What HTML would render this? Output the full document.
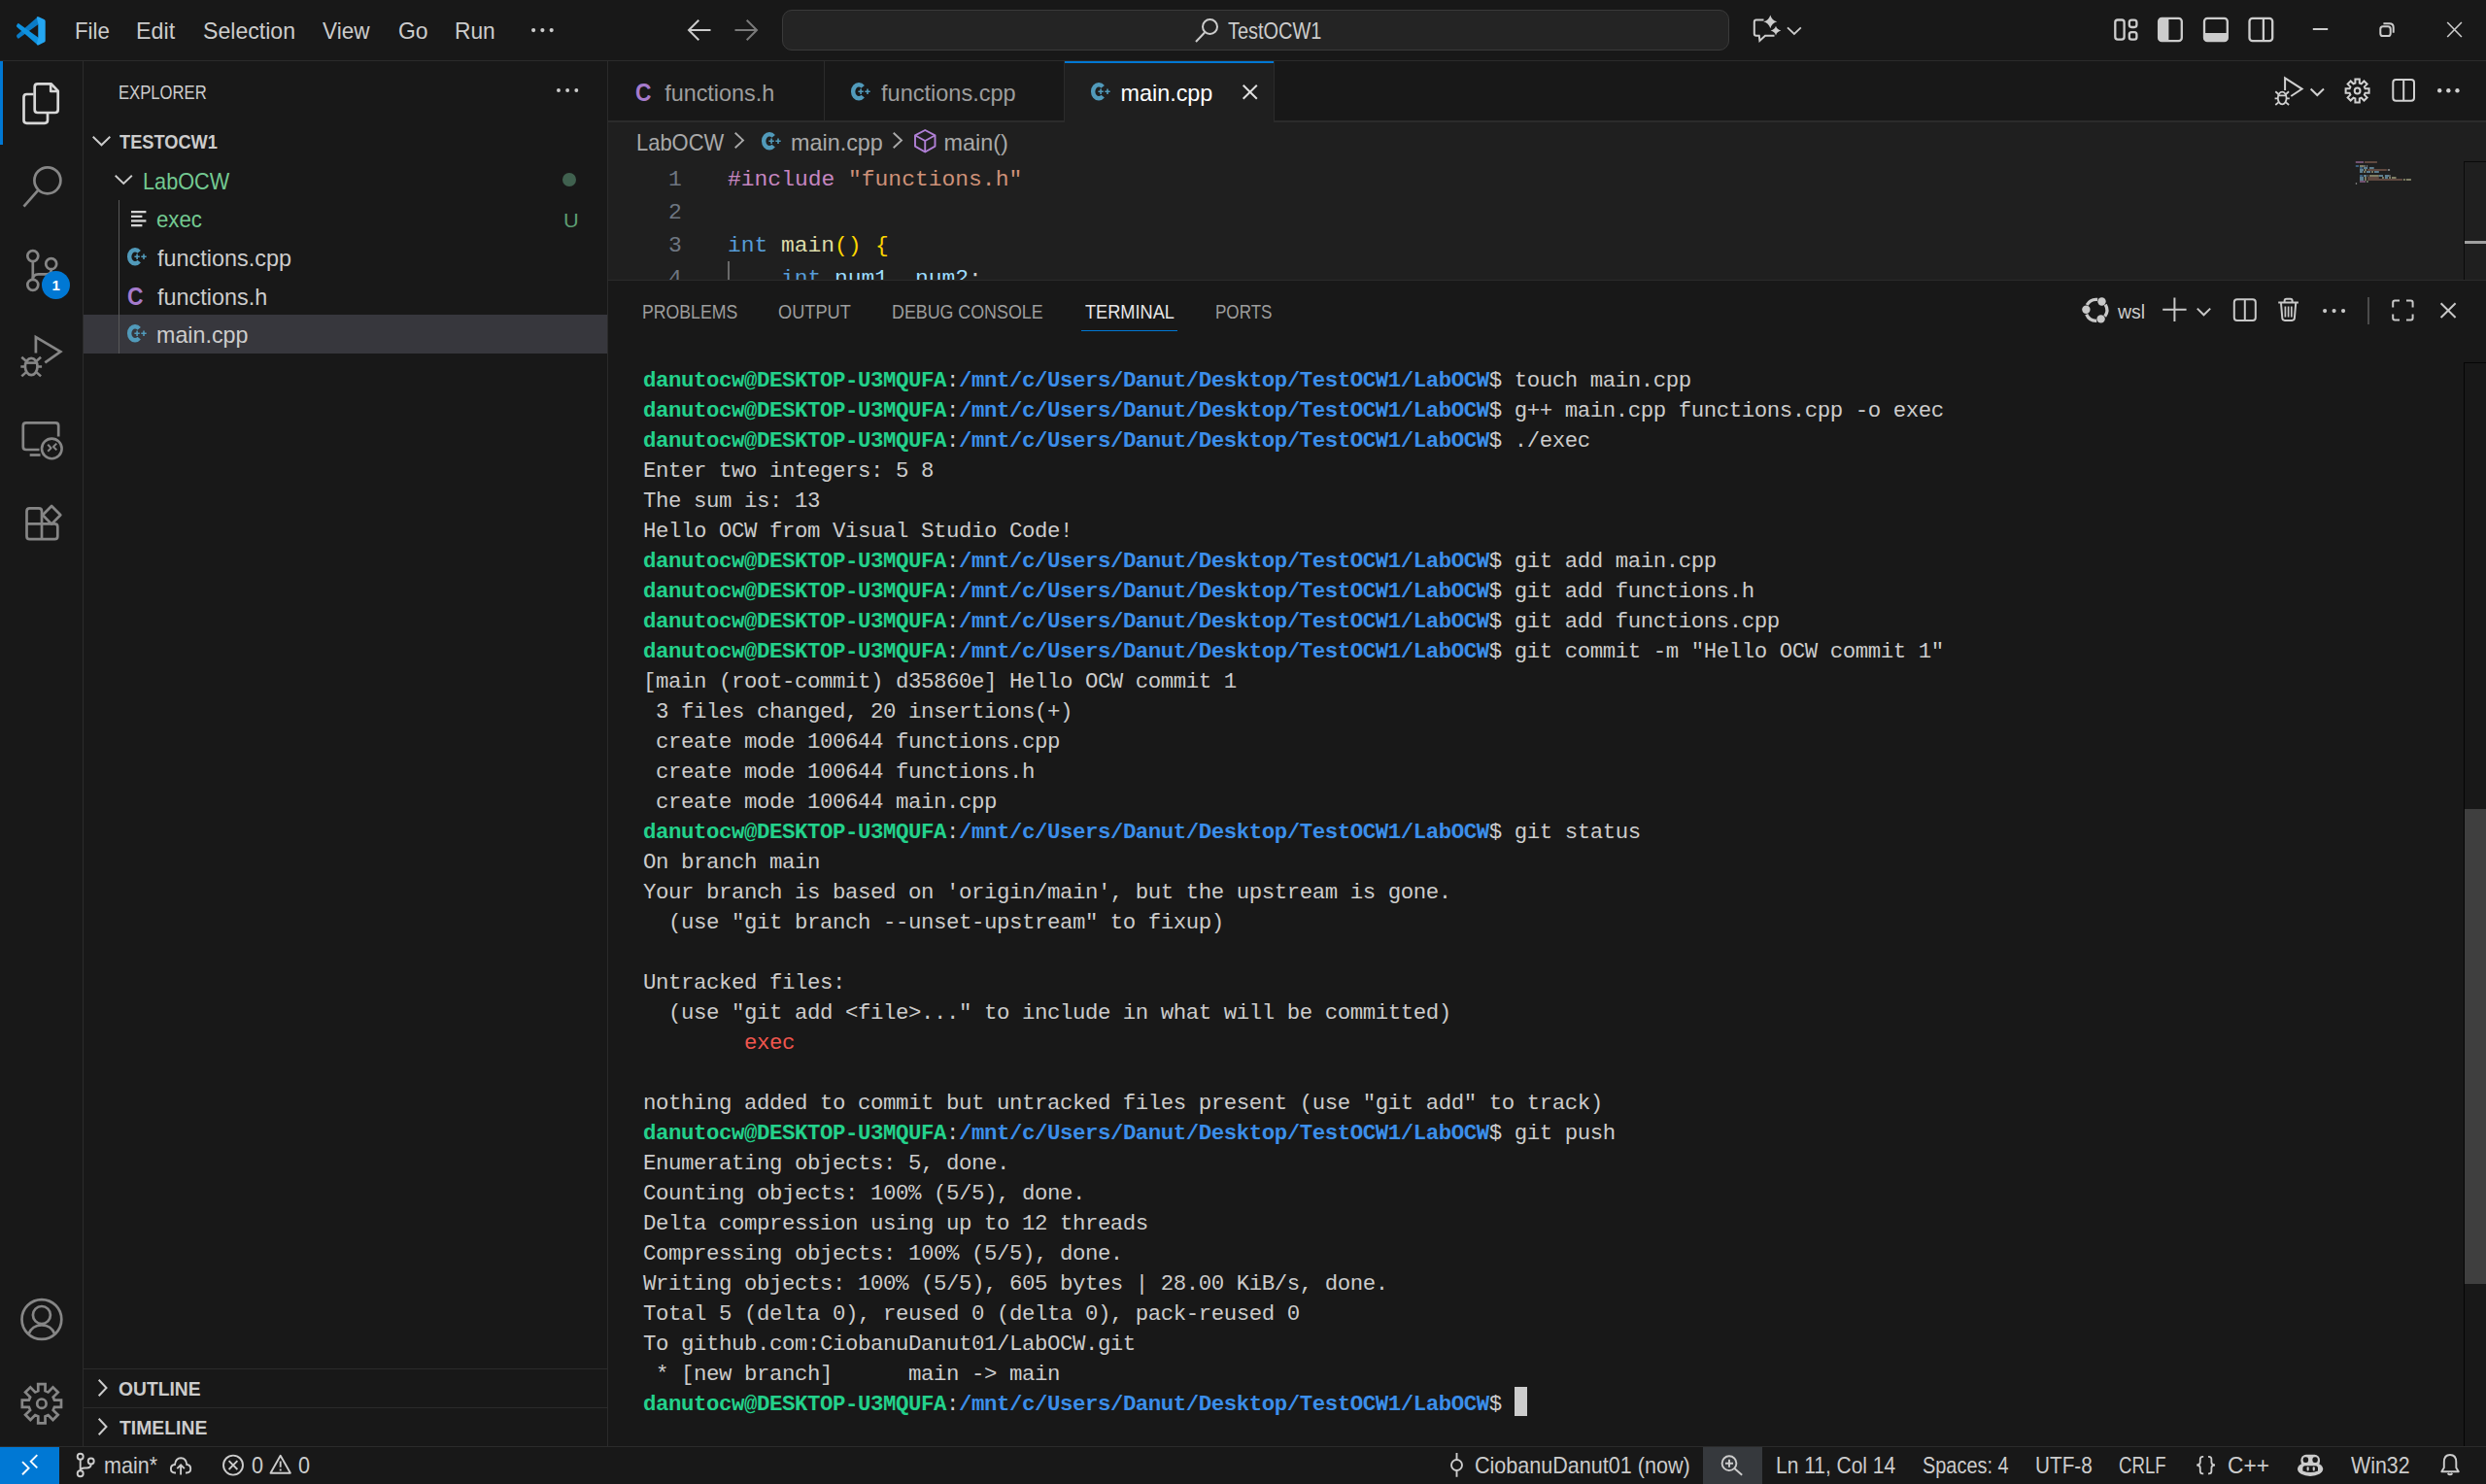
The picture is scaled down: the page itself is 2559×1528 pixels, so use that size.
<!DOCTYPE html>
<html>
<head>
<meta charset="utf-8">
<title>main.cpp - TestOCW1 - Visual Studio Code</title>
<style>
*{box-sizing:border-box;margin:0;padding:0}
html,body{width:2559px;height:1528px;overflow:hidden;background:#181818;color:#cccccc;font-family:"Liberation Sans",sans-serif;font-size:23.4px}
.t{position:absolute;white-space:pre;line-height:1}
.b{position:absolute}
svg{position:absolute;overflow:visible}
#titlebar{position:absolute;left:0;top:0;width:2559px;height:63px;background:#181818;border-bottom:1px solid #2b2b2b}
#activity{position:absolute;left:0;top:63px;width:86px;height:1426px;background:#181818;border-right:1px solid #2b2b2b}
#sidebar{position:absolute;left:86px;top:63px;width:540px;height:1426px;background:#181818;border-right:1px solid #2b2b2b}
#tabs{position:absolute;left:626px;top:63px;width:1933px;height:63px;background:#181818;border-bottom:2px solid #2b2b2b}
#editor{position:absolute;left:626px;top:126px;width:1933px;height:162px;background:#1f1f1f;overflow:hidden}
#panel{position:absolute;left:626px;top:288px;width:1933px;height:1201px;background:#181818;border-top:1px solid #2b2b2b;overflow:hidden}
#status{position:absolute;left:0;top:1489px;width:2559px;height:39px;background:#181818;border-top:1px solid #2b2b2b}
.term{position:absolute;font-family:"Liberation Mono",monospace;font-size:22.4px;letter-spacing:-0.44px;line-height:31px;white-space:pre;color:#cccccc}
.g{color:#23d18b;font-weight:bold}
.bl{color:#3b8eea;font-weight:bold}
.r{color:#f0564e}
</style>
</head>
<body>
<div id="titlebar">
<svg style="left:16.6px;top:16.6px" width="29.7" height="29.7" viewBox="0 0 100 100">
<path d="M74 1 L76 27 L8 76 Q5 77 3 74 L0.5 69 Q-1 66 2 63 Z" fill="#0a7bc6"/>
<path d="M8 24 Q5 23 3 26 L0.5 31 Q-1 34 2 37 L74 99 L76 73 Z" fill="#0e92e0"/>
<path d="M70 2 Q73 0 76 1 L96 10.5 Q100 12.5 100 17 L100 83 Q100 87.5 96 89.5 L76 99 Q73 100 70 98 L75 73 L75 27 Z" fill="#24a6f2"/>
</svg>
<div class="t" style="left:77.02px;top:21px;font-size:23.4px;color:#cccccc;transform:scaleX(0.9522);transform-origin:0 0;">File</div>
<div class="t" style="left:140.14px;top:21px;font-size:23.4px;color:#cccccc;transform:scaleX(0.9954);transform-origin:0 0;">Edit</div>
<div class="t" style="left:208.76px;top:21px;font-size:23.4px;color:#cccccc;transform:scaleX(0.9879);transform-origin:0 0;">Selection</div>
<div class="t" style="left:332.00px;top:21px;font-size:23.4px;color:#cccccc;transform:scaleX(0.9640);transform-origin:0 0;">View</div>
<div class="t" style="left:409.56px;top:21px;font-size:23.4px;color:#cccccc;transform:scaleX(0.9783);transform-origin:0 0;">Go</div>
<div class="t" style="left:468.08px;top:21px;font-size:23.4px;color:#cccccc;transform:scaleX(0.9732);transform-origin:0 0;">Run</div>
<svg style="left:546.60px;top:28.90px" width="22.8" height="4.2" viewBox="0 0 22.8 4.2" fill="#cccccc"><circle cx="2.1" cy="2.1" r="2.1"/><circle cx="11.4" cy="2.1" r="2.1"/><circle cx="20.700000000000003" cy="2.1" r="2.1"/></svg>
<svg style="left:0;top:0" width="2559" height="62" viewBox="0 0 2559 62" fill="none" stroke="#cccccc" stroke-width="2">
<path d="M731.5 31 H709 M719.3 20.7 L709 31 L719.3 41.3"/>
<path d="M756.5 31 H779 M768.7 20.7 L779 31 L768.7 41.3" stroke="#7a7a7a"/>
</svg>
<div class="b" style="left:805px;top:10px;width:975px;height:42px;background:#242424;border:1px solid #3a3a3a;border-radius:10px"></div>
<svg style="left:1230px;top:18px" width="25" height="26" viewBox="0 0 25 26" fill="none" stroke="#cccccc" stroke-width="2"><circle cx="15.5" cy="9.5" r="7.5"/><path d="M10 15.5 L1 25"/></svg>
<div class="t" style="left:1264.40px;top:21px;font-size:23.4px;color:#cccccc;transform:scaleX(0.8529);transform-origin:0 0;">TestOCW1</div>
<svg style="left:0;top:0" width="2559" height="62" viewBox="0 0 2559 62" fill="none" stroke="#cccccc" stroke-width="2" stroke-linejoin="miter">
<path d="M1815.5 20.4 H1807.8 Q1805.8 20.4 1805.8 22.4 V34.8 Q1805.8 36.8 1807.8 36.8 H1810.8 L1811.4 42 L1817 36.8 H1826.5"/>
<path d="M1822.3 15.4 Q1823.84 20.782 1829.3 22.3 Q1823.84 23.818 1822.3 29.200000000000003 Q1820.76 23.818 1815.3 22.3 Q1820.76 20.782 1822.3 15.4 Z" fill="#cccccc" stroke="none"/>
<path d="M1828 26.8 Q1829.166 30.544 1833.3 31.6 Q1829.166 32.656 1828 36.4 Q1826.834 32.656 1822.7 31.6 Q1826.834 30.544 1828 26.8 Z" fill="#cccccc" stroke="none"/>
<path d="M1840 28.3 L1846.9 34.9 L1853.8 28.3" stroke-width="1.8"/>
<g stroke-width="2.3">
<rect x="2177.3" y="20.5" width="9.3" height="20.1" rx="2.6"/>
<rect x="2191.8" y="20.6" width="7.6" height="7.4" rx="2.4"/>
<rect x="2191.8" y="33.2" width="7.6" height="7.4" rx="2.4"/>
<rect x="2222.1" y="18.9" width="23.7" height="23.3" rx="3.2"/>
<path d="M2222.1 22.1 Q2222.1 18.9 2225.3 18.9 H2232.4 V42.2 H2225.3 Q2222.1 42.2 2222.1 39 Z" fill="#cccccc" stroke="none"/>
<rect x="2269" y="18.9" width="23.8" height="23.3" rx="3.2"/>
<path d="M2269 33.9 H2292.8 V39 Q2292.8 42.2 2289.6 42.2 H2272.2 Q2269 42.2 2269 39 Z" fill="#cccccc" stroke="none"/>
<rect x="2315.5" y="18.9" width="23.7" height="23.3" rx="3.2"/>
<path d="M2329.9 18.9 V42.2"/>
</g>
<path d="M2380.8 30 H2396.2"/>
<rect x="2450.3" y="27.3" width="10.4" height="9.7" rx="2.6"/>
<path d="M2453.4 24.2 H2459.7 Q2463.7 24.2 2463.7 28.2 V33.8"/>
<path d="M2519.2 23 L2533.9 38 M2533.9 23 L2519.2 38" stroke-width="1.6"/>
</svg>
</div>
<div id="activity">
<div class="b" style="left:0;top:0;width:3px;height:86px;background:#0078d4"></div>
<svg style="left:0;top:0" width="86" height="1426" viewBox="0 63 86 1426" fill="none" stroke-width="2.7" stroke-linejoin="round" stroke-linecap="butt">
<g stroke="#d7d7d7">
<path d="M38.7 86.3 H52.5 L59.7 93.6 V113 Q59.7 116 56.7 116 H38.7 Q35.7 116 35.7 113 V89.3 Q35.7 86.3 38.7 86.3 Z"/>
<path d="M52.2 86.8 V94 H59.5" stroke-width="2.6"/>
<path d="M34.5 97 H27.5 Q24.5 97 24.5 100 V123.8 Q24.5 126.8 27.5 126.8 H46 Q49 126.8 49 123.8 V117"/>
</g>
<g stroke="#868686">
<circle cx="48.9" cy="185.8" r="13.5"/>
<path d="M39 196.2 L24.5 212.6" />
<!-- source control -->
<circle cx="33.8" cy="263.6" r="5.5"/>
<circle cx="52.7" cy="271.7" r="5.5"/>
<circle cx="33.8" cy="293.3" r="5.5"/>
<path d="M33.8 269.1 V287.8"/>
<path d="M52.7 277.2 V278 Q52.7 282.4 48 282.4 H39.5 Q33.8 282.4 33.8 287.8"/>
<!-- debug -->
<path d="M36.9 363.5 V347 L62.3 362 L46.3 373.4" stroke-linejoin="miter"/>
<ellipse cx="32.2" cy="377.5" rx="6.3" ry="8.6"/>
<path d="M26 373.6 H38.4" stroke-width="2.6"/>
<path d="M25.9 377.5 H21.3 M38.5 377.5 H43.1 M26.6 371.5 L22.3 367.8 M37.8 371.5 L42.1 367.8 M26.8 383.4 L22.3 387.4 M37.6 383.4 L42.1 387.4" stroke-width="2.6"/>
<!-- remote explorer -->
<path d="M60.2 449.5 V438.3 Q60.2 435.3 57.2 435.3 H26.8 Q23.8 435.3 23.8 438.3 V460 Q23.8 463 26.8 463 H40.5"/>
<path d="M30.7 468.5 H41.5" />
<circle cx="53.3" cy="461.9" r="10.3" stroke-width="2.6"/>
<path d="M49.2 457.7 L52.6 461.2 L49.2 464.8 M58.3 456.6 L54.9 460 L58.3 463.4" stroke-width="2"/>
<!-- extensions -->
<path d="M27.5 539.3 V526.4 Q27.5 523.4 30.5 523.4 H40 Q43 523.4 43 526.4 V539.3 M27.5 539.3 V552.2 Q27.5 555.2 30.5 555.2 H56.3 Q59.3 555.2 59.3 552.2 V542.3 Q59.3 539.3 56.3 539.3 H27.5 M43 539.3 V555.2"/>
<path d="M53.1 521 L62.3 530.3 L53.1 539.6 L43.9 530.3 Z"/>
<!-- account -->
<circle cx="42.9" cy="1358.5" r="20.4"/>
<circle cx="42.9" cy="1354" r="9"/>
<path d="M29.5 1373.5 Q33 1364.5 42.9 1364.5 Q52.8 1364.5 56.3 1373.5" />
<!-- gear -->
<circle cx="42.9" cy="1445.2" r="4.7"/>
<path d="M39.3 1432.1 L39.2 1425.1 L46.6 1425.1 L46.5 1432.1 L49.6 1433.4 L54.5 1428.4 L59.7 1433.6 L54.7 1438.5 L56.0 1441.6 L63.0 1441.5 L63.0 1448.9 L56.0 1448.8 L54.7 1451.9 L59.7 1456.8 L54.5 1462.0 L49.6 1457.0 L46.5 1458.3 L46.6 1465.3 L39.2 1465.3 L39.3 1458.3 L36.2 1457.0 L31.3 1462.0 L26.1 1456.8 L31.1 1451.9 L29.8 1448.8 L22.8 1448.9 L22.8 1441.5 L29.8 1441.6 L31.1 1438.5 L26.1 1433.6 L31.3 1428.4 L36.2 1433.4 Z" stroke-linejoin="miter"/>
</g>
</svg>
<div class="b" style="left:43px;top:215.9px;width:29.2px;height:29.2px;border-radius:50%;background:#0078d4"></div>
<div class="t" style="left:43px;top:223px;width:29.2px;text-align:center;font-size:15px;font-weight:bold;color:#fff">1</div>
</div>
<div id="sidebar">
<div class="t" style="left:36.27px;top:23px;font-size:19.8px;color:#cccccc;transform:scaleX(0.8422);transform-origin:0 0;">EXPLORER</div>
<svg style="left:487.25px;top:28.35px" width="22.299999999999997" height="3.9" viewBox="0 0 22.299999999999997 3.9" fill="#cccccc"><circle cx="1.95" cy="1.95" r="1.95"/><circle cx="11.149999999999999" cy="1.95" r="1.95"/><circle cx="20.349999999999998" cy="1.95" r="1.95"/></svg>
<svg style="left:9.099999999999994px;top:76.9px" width="19" height="10.3" viewBox="0 0 19 10.3" fill="none" stroke="#cccccc" stroke-width="1.9"><path d="M0.7 0.7 L9.5 9.3 L18.3 0.7"/></svg>
<div class="t" style="left:36.62px;top:74px;font-size:19.8px;color:#cccccc;font-weight:700;transform:scaleX(0.9210);transform-origin:0 0;">TESTOCW1</div>
<div class="b" style="left:0;top:261px;width:539px;height:40px;background:#37373d"></div>
<div class="b" style="left:36px;top:143px;width:1px;height:158px;background:#585858"></div>
<svg style="left:32.3px;top:117.4px" width="18.5" height="9.9" viewBox="0 0 18.5 9.9" fill="none" stroke="#cccccc" stroke-width="1.9"><path d="M0.7 0.7 L9.25 8.9 L17.8 0.7"/></svg>
<div class="t" style="left:61.16px;top:113px;font-size:23.4px;color:#73c991;transform:scaleX(0.9278);transform-origin:0 0;">LabOCW</div>
<div class="b" style="left:493.20000000000005px;top:115.4px;width:13.8px;height:13.8px;border-radius:50%;background:#40614f"></div>
<svg style="left:49.400000000000006px;top:154.4px" width="16" height="17" viewBox="0 0 16 17" fill="#d4d4d4"><rect x="0" y="0" width="15.4" height="2.3"/><rect x="0" y="4.7" width="11.4" height="2.3"/><rect x="0" y="9.3" width="15.4" height="2.3"/><rect x="0" y="14" width="11.4" height="2.3"/></svg>
<div class="t" style="left:75.41px;top:152px;font-size:23.4px;color:#73c991;transform:scaleX(0.9508);transform-origin:0 0;">exec</div>
<div class="t" style="left:494.27px;top:153px;font-size:21px;color:#5c9d73;transform:scaleX(1.0359);transform-origin:0 0;">U</div>
<svg style="left:44.90px;top:191.70px" width="21" height="19" viewBox="0 0 21 19"><path d="M12.21 4.35 A5.85 7.05 0 1 0 12.21 14.15" fill="none" stroke="#519aba" stroke-width="4.4"/><path d="M7.3999999999999995 8.5 H9.299999999999999 V6.6000000000000005 H10.9 V8.5 H12.8 V10.100000000000001 H10.9 V12.0 H9.299999999999999 V10.100000000000001 H7.3999999999999995 Z M14.3 8.5 H16.2 V6.6000000000000005 H17.8 V8.5 H19.7 V10.100000000000001 H17.8 V12.0 H16.2 V10.100000000000001 H14.3 Z" fill="#519aba" stroke="#181818" stroke-width="0.9" paint-order="stroke"/></svg>
<div class="t" style="left:76.07px;top:192px;font-size:23.4px;color:#cccccc;">functions.cpp</div>
<div class="t" style="left:45.49px;top:229px;font-size:26px;color:#a67bcc;font-weight:700;transform:scaleX(0.8749);transform-origin:0 0;">C</div>
<div class="t" style="left:76.07px;top:232px;font-size:23.4px;color:#cccccc;">functions.h</div>
<svg style="left:44.90px;top:270.90px" width="21" height="19" viewBox="0 0 21 19"><path d="M12.21 4.35 A5.85 7.05 0 1 0 12.21 14.15" fill="none" stroke="#519aba" stroke-width="4.4"/><path d="M7.3999999999999995 8.5 H9.299999999999999 V6.6000000000000005 H10.9 V8.5 H12.8 V10.100000000000001 H10.9 V12.0 H9.299999999999999 V10.100000000000001 H7.3999999999999995 Z M14.3 8.5 H16.2 V6.6000000000000005 H17.8 V8.5 H19.7 V10.100000000000001 H17.8 V12.0 H16.2 V10.100000000000001 H14.3 Z" fill="#519aba" stroke="#37373d" stroke-width="0.9" paint-order="stroke"/></svg>
<div class="t" style="left:75.39px;top:271px;font-size:23.4px;color:#cccccc;transform:scaleX(0.9953);transform-origin:0 0;">main.cpp</div>
<div class="b" style="left:0;top:1346px;width:539px;height:1px;background:#2b2b2b"></div>
<div class="b" style="left:0;top:1386px;width:539px;height:1px;background:#2b2b2b"></div>
<svg style="left:14.5px;top:1357px" width="9.5" height="18" viewBox="0 0 9.5 18" fill="none" stroke="#cccccc" stroke-width="2"><path d="M0.7 0.7 L8.5 9.0 L0.7 17.3"/></svg>
<div class="t" style="left:36.13px;top:1358px;font-size:19.8px;color:#cccccc;font-weight:700;transform:scaleX(0.9738);transform-origin:0 0;">OUTLINE</div>
<svg style="left:14.5px;top:1397px" width="9.5" height="18" viewBox="0 0 9.5 18" fill="none" stroke="#cccccc" stroke-width="2"><path d="M0.7 0.7 L8.5 9.0 L0.7 17.3"/></svg>
<div class="t" style="left:36.71px;top:1398px;font-size:19.8px;color:#cccccc;font-weight:700;transform:scaleX(0.9784);transform-origin:0 0;">TIMELINE</div>
</div>
<div id="tabs">
<div class="b" style="left:222px;top:0;width:1px;height:61px;background:#2b2b2b"></div>
<div class="b" style="left:469px;top:0;width:1px;height:61px;background:#2b2b2b"></div>
<div class="b" style="left:470px;top:0;width:215px;height:63px;background:#1f1f1f;border-top:2px solid #0078d4"></div>
<div class="b" style="left:685px;top:0;width:1px;height:61px;background:#2b2b2b"></div>
<div class="t" style="left:27.99px;top:19px;font-size:26px;color:#a67bcc;font-weight:700;transform:scaleX(0.8749);transform-origin:0 0;">C</div>
<div class="t" style="left:58.17px;top:22px;font-size:23.4px;color:#9d9d9d;">functions.h</div>
<svg style="left:249.50px;top:21.70px" width="21" height="19" viewBox="0 0 21 19"><path d="M12.21 4.35 A5.85 7.05 0 1 0 12.21 14.15" fill="none" stroke="#519aba" stroke-width="4.4"/><path d="M7.3999999999999995 8.5 H9.299999999999999 V6.6000000000000005 H10.9 V8.5 H12.8 V10.100000000000001 H10.9 V12.0 H9.299999999999999 V10.100000000000001 H7.3999999999999995 Z M14.3 8.5 H16.2 V6.6000000000000005 H17.8 V8.5 H19.7 V10.100000000000001 H17.8 V12.0 H16.2 V10.100000000000001 H14.3 Z" fill="#519aba" stroke="#181818" stroke-width="0.9" paint-order="stroke"/></svg>
<div class="t" style="left:280.66px;top:22px;font-size:23.4px;color:#9d9d9d;transform:scaleX(1.0062);transform-origin:0 0;">functions.cpp</div>
<svg style="left:496.70px;top:21.70px" width="21" height="19" viewBox="0 0 21 19"><path d="M12.21 4.35 A5.85 7.05 0 1 0 12.21 14.15" fill="none" stroke="#519aba" stroke-width="4.4"/><path d="M7.3999999999999995 8.5 H9.299999999999999 V6.6000000000000005 H10.9 V8.5 H12.8 V10.100000000000001 H10.9 V12.0 H9.299999999999999 V10.100000000000001 H7.3999999999999995 Z M14.3 8.5 H16.2 V6.6000000000000005 H17.8 V8.5 H19.7 V10.100000000000001 H17.8 V12.0 H16.2 V10.100000000000001 H14.3 Z" fill="#519aba" stroke="#1f1f1f" stroke-width="0.9" paint-order="stroke"/></svg>
<div class="t" style="left:527.48px;top:22px;font-size:23.4px;color:#ffffff;">main.cpp</div>
<svg style="left:652.65px;top:23.75px" width="15.5" height="15.5" viewBox="0 0 15.5 15.5" fill="none" stroke="#e0e0e0" stroke-width="2"><path d="M0.7 0.7 L14.8 14.8 M14.8 0.7 L0.7 14.8"/></svg>
<svg style="left:0;top:0" width="1933" height="62" viewBox="626 63 1933 62" fill="none" stroke="#d0d0d0" stroke-width="2" stroke-linejoin="miter">
<path d="M2352.1 93 V80.3 L2369.6 91.6 L2358.3 99"/>
<ellipse cx="2349.2" cy="101" rx="4.4" ry="6.3" stroke-width="1.8"/>
<path d="M2344.8 98.3 H2353.6 M2344.7 101.3 H2341.6 M2353.7 101.3 H2356.8 M2345.4 97 L2342.3 94.3 M2353 97 L2356.1 94.3 M2345.4 105.4 L2342.3 108 M2353 105.4 L2356.1 108" stroke-width="1.8"/>
<path d="M2378.6 91.5 L2385.3 98 L2392 91.5" />
<circle cx="2426.6" cy="93.5" r="2.9"/>
<path d="M2424.4 85.5 L2424.4 81.5 L2428.8 81.5 L2428.8 85.5 L2430.7 86.3 L2433.5 83.5 L2436.6 86.6 L2433.8 89.4 L2434.6 91.3 L2438.6 91.3 L2438.6 95.7 L2434.6 95.7 L2433.8 97.6 L2436.6 100.4 L2433.5 103.5 L2430.7 100.7 L2428.8 101.5 L2428.8 105.5 L2424.4 105.5 L2424.4 101.5 L2422.5 100.7 L2419.7 103.5 L2416.6 100.4 L2419.4 97.6 L2418.6 95.7 L2414.6 95.7 L2414.6 91.3 L2418.6 91.3 L2419.4 89.4 L2416.6 86.6 L2419.7 83.5 L2422.5 86.3 Z"/>
<rect x="2463.3" y="82" width="21.7" height="21.7" rx="3"/>
<path d="M2474.2 82 V103.7"/>
</svg>
<svg style="left:1883.05px;top:28.30px" width="22.700000000000003" height="4.4" viewBox="0 0 22.700000000000003 4.4" fill="#d0d0d0"><circle cx="2.2" cy="2.2" r="2.2"/><circle cx="11.350000000000001" cy="2.2" r="2.2"/><circle cx="20.5" cy="2.2" r="2.2"/></svg>
</div>
<div id="editor">
<div class="t" style="left:29.04px;top:10px;font-size:23.4px;color:#a9a9a9;transform:scaleX(0.9384);transform-origin:0 0;">LabOCW</div>
<svg style="left:130.20px;top:10.20px" width="10" height="17" viewBox="0 0 10 17" fill="none" stroke="#a9a9a9" stroke-width="1.9"><path d="M0.7 0.7 L9 8.5 L0.7 16.3"/></svg>
<svg style="left:157.70px;top:9.90px" width="21" height="19" viewBox="0 0 21 19"><path d="M12.21 4.35 A5.85 7.05 0 1 0 12.21 14.15" fill="none" stroke="#519aba" stroke-width="4.4"/><path d="M7.3999999999999995 8.5 H9.299999999999999 V6.6000000000000005 H10.9 V8.5 H12.8 V10.100000000000001 H10.9 V12.0 H9.299999999999999 V10.100000000000001 H7.3999999999999995 Z M14.3 8.5 H16.2 V6.6000000000000005 H17.8 V8.5 H19.7 V10.100000000000001 H17.8 V12.0 H16.2 V10.100000000000001 H14.3 Z" fill="#519aba" stroke="#1f1f1f" stroke-width="0.9" paint-order="stroke"/></svg>
<div class="t" style="left:187.98px;top:10px;font-size:23.4px;color:#a9a9a9;">main.cpp</div>
<svg style="left:293.20px;top:10.20px" width="10" height="17" viewBox="0 0 10 17" fill="none" stroke="#a9a9a9" stroke-width="1.9"><path d="M0.7 0.7 L9 8.5 L0.7 16.3"/></svg>
<svg style="left:314.9px;top:7px" width="22.5" height="24.5" viewBox="0 0 22.5 24.5" fill="none" stroke="#b180d7" stroke-width="1.9" stroke-linejoin="round"><path d="M11.25 1 L21.5 6.3 V17.6 L11.25 23.5 L1 17.6 V6.3 Z"/><path d="M1.3 6.5 L11.25 12 L21.2 6.5 M11.25 12 V23.3"/></svg>
<div class="t" style="left:345.48px;top:10px;font-size:23.4px;color:#a9a9a9;">main()</div>
<div class="t" style="left:61.70px;top:48px;font-size:22.4px;color:#6e7681;font-family:'Liberation Mono',monospace;transform:scaleX(1.0266);transform-origin:0 0;">1</div>
<div class="t" style="left:61.70px;top:82px;font-size:22.4px;color:#6e7681;font-family:'Liberation Mono',monospace;transform:scaleX(1.0266);transform-origin:0 0;">2</div>
<div class="t" style="left:61.70px;top:116px;font-size:22.4px;color:#6e7681;font-family:'Liberation Mono',monospace;transform:scaleX(1.0266);transform-origin:0 0;">3</div>
<div class="t" style="left:61.70px;top:150px;font-size:22.4px;color:#6e7681;font-family:'Liberation Mono',monospace;transform:scaleX(1.0266);transform-origin:0 0;">4</div>
<div class="t" style="left:123.00px;top:48px;font-size:22.4px;color:#c586c0;font-family:'Liberation Mono',monospace;transform:scaleX(1.0259);transform-origin:0 0;">#include</div>
<div class="t" style="left:247.11px;top:48px;font-size:22.4px;color:#ce9178;font-family:'Liberation Mono',monospace;transform:scaleX(1.0259);transform-origin:0 0;">"functions.h"</div>
<div class="t" style="left:123.00px;top:116px;font-size:22.4px;color:#569cd6;font-family:'Liberation Mono',monospace;transform:scaleX(1.0259);transform-origin:0 0;">int</div>
<div class="t" style="left:178.16px;top:116px;font-size:22.4px;color:#dcdcaa;font-family:'Liberation Mono',monospace;transform:scaleX(1.0259);transform-origin:0 0;">main</div>
<div class="t" style="left:233.32px;top:116px;font-size:22.4px;color:#ffd700;font-family:'Liberation Mono',monospace;transform:scaleX(1.0259);transform-origin:0 0;">()</div>
<div class="t" style="left:274.69px;top:116px;font-size:22.4px;color:#ffd700;font-family:'Liberation Mono',monospace;transform:scaleX(1.0259);transform-origin:0 0;">{</div>
<div class="t" style="left:178.16px;top:150px;font-size:22.4px;color:#569cd6;font-family:'Liberation Mono',monospace;transform:scaleX(1.0259);transform-origin:0 0;">int</div>
<div class="t" style="left:233.32px;top:150px;font-size:22.4px;color:#9cdcfe;font-family:'Liberation Mono',monospace;transform:scaleX(1.0259);transform-origin:0 0;">num1</div>
<div class="t" style="left:288.48px;top:150px;font-size:22.4px;color:#cccccc;font-family:'Liberation Mono',monospace;transform:scaleX(1.0259);transform-origin:0 0;">,</div>
<div class="t" style="left:316.06px;top:150px;font-size:22.4px;color:#9cdcfe;font-family:'Liberation Mono',monospace;transform:scaleX(1.0259);transform-origin:0 0;">num2</div>
<div class="t" style="left:371.22px;top:150px;font-size:22.4px;color:#cccccc;font-family:'Liberation Mono',monospace;transform:scaleX(1.0259);transform-origin:0 0;">;</div>
<div class="b" style="left:123px;top:143px;width:2px;height:20px;background:#6a6a6a"></div>
<div class="b" style="left:1910px;top:40px;width:23px;height:130px;border-left:1px solid #0a0a0a;border-top:1px solid #0a0a0a"></div>
<div class="b" style="left:1911px;top:122px;width:22px;height:3px;background:#a0a0a0"></div>
<svg style="left:0;top:0" width="1933" height="162" viewBox="626 126 1933 162" opacity="0.5"><rect x="2424.8" y="166" width="8.2" height="2" fill="#c586c0" opacity="1"/><rect x="2434.0" y="166" width="12.9" height="2" fill="#ce9178" opacity="0.75"/><rect x="2424.8" y="170" width="3.2" height="2" fill="#569cd6" opacity="1"/><rect x="2429.0" y="170" width="4.0" height="2" fill="#dcdcaa" opacity="1"/><rect x="2433.3" y="170" width="1.6" height="2" fill="#cccccc" opacity="1"/><rect x="2436.1" y="170" width="1.0" height="2" fill="#cccccc" opacity="1"/><rect x="2429.0" y="172" width="3.1" height="2" fill="#569cd6" opacity="1"/><rect x="2433.0" y="172" width="4.2" height="2" fill="#9cdcfe" opacity="1"/><rect x="2439.0" y="172" width="4.7" height="2" fill="#9cdcfe" opacity="1"/><rect x="2429.0" y="174" width="4.0" height="2" fill="#9cdcfe" opacity="1"/><rect x="2434.0" y="174" width="1.9" height="2" fill="#dcdcaa" opacity="1"/><rect x="2437.2" y="174" width="19.6" height="2" fill="#ce9178" opacity="0.75"/><rect x="2457.8" y="174" width="2.3" height="2" fill="#cccccc" opacity="1"/><rect x="2429.0" y="176" width="3.1" height="2" fill="#9cdcfe" opacity="1"/><rect x="2433.0" y="176" width="1.9" height="2" fill="#dcdcaa" opacity="1"/><rect x="2435.9" y="176" width="4.2" height="2" fill="#9cdcfe" opacity="1"/><rect x="2441.1" y="176" width="1.9" height="2" fill="#dcdcaa" opacity="1"/><rect x="2444.0" y="176" width="4.8" height="2" fill="#9cdcfe" opacity="1"/><rect x="2429.0" y="180" width="3.1" height="2" fill="#569cd6" opacity="1"/><rect x="2433.0" y="180" width="3.1" height="2" fill="#9cdcfe" opacity="1"/><rect x="2437.2" y="180" width="0.8" height="2" fill="#cccccc" opacity="1"/><rect x="2439.0" y="180" width="9.8" height="2" fill="#dcdcaa" opacity="1"/><rect x="2448.8" y="180" width="4.2" height="2" fill="#9cdcfe" opacity="1"/><rect x="2454.9" y="180" width="4.5" height="2" fill="#9cdcfe" opacity="1"/><rect x="2459.4" y="180" width="1.3" height="2" fill="#cccccc" opacity="1"/><rect x="2429.0" y="182" width="4.0" height="2" fill="#9cdcfe" opacity="1"/><rect x="2434.0" y="182" width="1.9" height="2" fill="#dcdcaa" opacity="1"/><rect x="2437.2" y="182" width="11.6" height="2" fill="#ce9178" opacity="0.75"/><rect x="2452.0" y="182" width="1.9" height="2" fill="#dcdcaa" opacity="1"/><rect x="2454.9" y="182" width="3.1" height="2" fill="#9cdcfe" opacity="1"/><rect x="2459.1" y="182" width="1.9" height="2" fill="#dcdcaa" opacity="1"/><rect x="2462.0" y="182" width="4.5" height="2" fill="#dcdcaa" opacity="1"/><rect x="2429.0" y="184" width="4.0" height="2" fill="#9cdcfe" opacity="1"/><rect x="2434.0" y="184" width="1.9" height="2" fill="#dcdcaa" opacity="1"/><rect x="2437.2" y="184" width="35.7" height="2" fill="#ce9178" opacity="0.75"/><rect x="2473.9" y="184" width="1.9" height="2" fill="#dcdcaa" opacity="1"/><rect x="2476.8" y="184" width="5.1" height="2" fill="#dcdcaa" opacity="1"/><rect x="2429.0" y="186" width="6.0" height="2" fill="#c586c0" opacity="1"/><rect x="2435.9" y="186" width="1.9" height="2" fill="#b5cea8" opacity="1"/><rect x="2424.8" y="188" width="1.3" height="2" fill="#cccccc" opacity="1"/></svg>
</div>
<div id="panel">
<div class="t" style="left:34.98px;top:23px;font-size:19.8px;color:#9d9d9d;transform:scaleX(0.8939);transform-origin:0 0;">PROBLEMS</div>
<div class="t" style="left:175.48px;top:23px;font-size:19.8px;color:#9d9d9d;transform:scaleX(0.9202);transform-origin:0 0;">OUTPUT</div>
<div class="t" style="left:292.37px;top:23px;font-size:19.8px;color:#9d9d9d;transform:scaleX(0.9015);transform-origin:0 0;">DEBUG CONSOLE</div>
<div class="t" style="left:491.04px;top:23px;font-size:19.8px;color:#e7e7e7;transform:scaleX(0.9193);transform-origin:0 0;">TERMINAL</div>
<div class="t" style="left:625.13px;top:23px;font-size:19.8px;color:#9d9d9d;transform:scaleX(0.8619);transform-origin:0 0;">PORTS</div>
<div class="b" style="left:487px;top:51px;width:99px;height:1px;background:#0078d4"></div>
<svg style="left:0;top:0" width="1933" height="80" viewBox="626 289 1933 80" fill="none" stroke="#c8c8c8" stroke-width="2">
<path d="M2148.2 314.0 A11.0 11.0 0 0 1 2159.1 308.4 M2167.2 313.6 A11.0 11.0 0 0 1 2166.7 325.8 M2158.2 330.3 A11.0 11.0 0 0 1 2147.7 323.6" stroke-width="3.3"/>
<g fill="#c8c8c8" stroke="none"><circle cx="2163.5" cy="310.5" r="4.2"/><circle cx="2147.4" cy="318.8" r="4.2"/><circle cx="2162.6" cy="328.4" r="4.2"/></g>
<path d="M2226.2 318.8 H2250.6 M2238.4 306.6 V331"/>
<path d="M2261.8 317.6 L2268.5 324.3 L2275.2 317.6"/>
<rect x="2299.8" y="308.3" width="22" height="21.6" rx="3"/><path d="M2310.8 308.3 V329.9"/>
<path d="M2345.2 311.6 H2365.9 M2351.6 311.2 V309.7 Q2351.6 307.7 2353.6 307.7 H2357.6 Q2359.6 307.7 2359.6 309.7 V311.2 M2348 312 L2349.3 327.5 Q2349.5 329.9 2352 329.9 H2359.2 Q2361.7 329.9 2361.9 327.5 L2363.2 312"/>
<path d="M2352.4 315.5 V326.5 M2355.6 315.5 V326.5 M2358.8 315.5 V326.5" stroke-width="1.7"/>
<path d="M2438 306 V334" stroke="#5a5a5a" stroke-width="1.6"/>
<path d="M2463.2 316.5 V311.6 Q2463.2 309.6 2465.2 309.6 H2470 M2477 309.6 H2481.6 Q2483.6 309.6 2483.6 311.6 V316.5 M2483.6 323.5 V327.6 Q2483.6 329.6 2481.6 329.6 H2477 M2470 329.6 H2465.2 Q2463.2 329.6 2463.2 327.6 V323.5"/>
<path d="M2512.6 312.2 L2527.6 327 M2527.6 312.2 L2512.6 327"/>
</svg>
<svg style="left:1765.40px;top:28.60px" width="23.2" height="4.2" viewBox="0 0 23.2 4.2" fill="#c8c8c8"><circle cx="2.1" cy="2.1" r="2.1"/><circle cx="11.6" cy="2.1" r="2.1"/><circle cx="21.1" cy="2.1" r="2.1"/></svg>
<div class="t" style="left:1553.50px;top:23px;font-size:19.8px;color:#cccccc;transform:scaleX(0.9846);transform-origin:0 0;">wsl</div>
<div class="term" style="left:36px;top:88px"><span class="g">danutocw@DESKTOP-U3MQUFA</span>:<span class="bl">/mnt/c/Users/Danut/Desktop/TestOCW1/LabOCW</span>$ touch main.cpp
<span class="g">danutocw@DESKTOP-U3MQUFA</span>:<span class="bl">/mnt/c/Users/Danut/Desktop/TestOCW1/LabOCW</span>$ g++ main.cpp functions.cpp -o exec
<span class="g">danutocw@DESKTOP-U3MQUFA</span>:<span class="bl">/mnt/c/Users/Danut/Desktop/TestOCW1/LabOCW</span>$ ./exec
Enter two integers: 5 8
The sum is: 13
Hello OCW from Visual Studio Code!
<span class="g">danutocw@DESKTOP-U3MQUFA</span>:<span class="bl">/mnt/c/Users/Danut/Desktop/TestOCW1/LabOCW</span>$ git add main.cpp
<span class="g">danutocw@DESKTOP-U3MQUFA</span>:<span class="bl">/mnt/c/Users/Danut/Desktop/TestOCW1/LabOCW</span>$ git add functions.h
<span class="g">danutocw@DESKTOP-U3MQUFA</span>:<span class="bl">/mnt/c/Users/Danut/Desktop/TestOCW1/LabOCW</span>$ git add functions.cpp
<span class="g">danutocw@DESKTOP-U3MQUFA</span>:<span class="bl">/mnt/c/Users/Danut/Desktop/TestOCW1/LabOCW</span>$ git commit -m "Hello OCW commit 1"
[main (root-commit) d35860e] Hello OCW commit 1
 3 files changed, 20 insertions(+)
 create mode 100644 functions.cpp
 create mode 100644 functions.h
 create mode 100644 main.cpp
<span class="g">danutocw@DESKTOP-U3MQUFA</span>:<span class="bl">/mnt/c/Users/Danut/Desktop/TestOCW1/LabOCW</span>$ git status
On branch main
Your branch is based on 'origin/main', but the upstream is gone.
  (use "git branch --unset-upstream" to fixup)

Untracked files:
  (use "git add &lt;file&gt;..." to include in what will be committed)
        <span class="r">exec</span>

nothing added to commit but untracked files present (use "git add" to track)
<span class="g">danutocw@DESKTOP-U3MQUFA</span>:<span class="bl">/mnt/c/Users/Danut/Desktop/TestOCW1/LabOCW</span>$ git push
Enumerating objects: 5, done.
Counting objects: 100% (5/5), done.
Delta compression using up to 12 threads
Compressing objects: 100% (5/5), done.
Writing objects: 100% (5/5), 605 bytes | 28.00 KiB/s, done.
Total 5 (delta 0), reused 0 (delta 0), pack-reused 0
To github.com:CiobanuDanut01/LabOCW.git
 * [new branch]      main -&gt; main
<span class="g">danutocw@DESKTOP-U3MQUFA</span>:<span class="bl">/mnt/c/Users/Danut/Desktop/TestOCW1/LabOCW</span>$ </div>
<div class="b" style="left:933px;top:1139px;width:13px;height:30px;background:#cccccc"></div>
<div class="b" style="left:1910px;top:84px;width:23px;height:1117px;border-left:1px solid #050505;border-top:1px solid #050505"></div>
<div class="b" style="left:1911px;top:544px;width:22px;height:489px;background:#3f3f3f"></div>
</div>
<div id="status">
<div class="b" style="left:0;top:0;width:61px;height:38px;background:#0078d4"></div>
<div class="b" style="left:1753px;top:0;width:61px;height:38px;background:#36393d"></div>
<svg style="left:0;top:0" width="2559" height="38" viewBox="0 1490 2559 38" fill="none" stroke="#cccccc" stroke-width="1.9">
<path d="M23 1505.1 L29.6 1511.7 L23 1518.2 M38.3 1498.2 L31.7 1504.8 L38.3 1511.4" stroke="#ffffff"/>
<circle cx="82.7" cy="1499.7" r="3"/><circle cx="82.7" cy="1517.2" r="3"/><circle cx="93.7" cy="1504.5" r="3"/>
<path d="M82.7 1502.7 V1514.2 M93.7 1507.5 Q93.7 1511.5 89 1511.5 H87 Q82.7 1511.5 82.7 1514.2"/>
<path d="M181 1516.5 H180 Q175.9 1516.5 175.9 1512.3 Q175.9 1508.3 180 1508 Q180.8 1501.3 186.2 1501.3 Q191.6 1501.3 192.3 1508 Q196.2 1508.3 196.2 1512.3 Q196.2 1516.5 192 1516.5 H191"/>
<path d="M186.1 1518.5 V1509 M182.3 1512.2 L186.1 1508.4 L189.9 1512.2"/>
<circle cx="240" cy="1508.6" r="10"/><path d="M235.6 1504.2 L244.4 1513 M244.4 1504.2 L235.6 1513"/>
<path d="M288.7 1498.8 L298.9 1516.7 H278.5 Z" stroke-linejoin="round"/><path d="M288.7 1504.5 V1510.7 M288.7 1512.6 V1514.6"/>
<circle cx="1499.5" cy="1508.5" r="5.5"/><path d="M1499.5 1496 V1503 M1499.5 1514 V1520.8"/>
<circle cx="1780" cy="1506.7" r="7.4"/><path d="M1785.4 1512 L1793.2 1518.8 M1776 1506.7 H1784 M1780 1502.7 V1510.7"/>
<path d="M2268.2 1499.8 H2267.4 Q2264.8 1499.8 2264.8 1502.4 V1505.6 Q2264.8 1508.5 2261.2 1508.5 Q2264.8 1508.5 2264.8 1511.4 V1514.8 Q2264.8 1517.4 2267.4 1517.4 H2268.2 M2273 1499.8 H2273.8 Q2276.4 1499.8 2276.4 1502.4 V1505.6 Q2276.4 1508.5 2280 1508.5 Q2276.4 1508.5 2276.4 1511.4 V1514.8 Q2276.4 1517.4 2273.8 1517.4 H2273" stroke-width="1.8"/>
<g fill="#cccccc" stroke="none"><rect x="2368.4" y="1497.8" width="19.6" height="12" rx="5.4"/><ellipse cx="2378.1" cy="1512.6" rx="13.1" ry="7.3"/></g>
<g fill="#181818" stroke="none"><rect x="2370.7" y="1500.3" width="5.4" height="5.8" rx="2.3"/><rect x="2380.4" y="1500.3" width="5.4" height="5.8" rx="2.3"/><path d="M2370.4 1511.8 Q2370.4 1509.3 2372.9 1509.3 H2383.5 Q2386 1509.3 2386 1511.8 V1514.6 Q2378.2 1517.6 2370.4 1514.6 Z"/></g>
<g fill="#cccccc" stroke="none"><rect x="2374.6" y="1510.3" width="2.1" height="4.2" rx="1"/><rect x="2380.7" y="1510.3" width="2.1" height="4.2" rx="1"/></g>
<path d="M2513.3 1515.3 H2530.8 L2528.3 1511.3 V1505.5 Q2528.3 1498 2522 1498 Q2515.8 1498 2515.8 1505.5 V1511.3 Z" stroke-linejoin="round"/><path d="M2519.6 1517 Q2522 1519.6 2524.4 1517"/>
</svg>
<div class="t" style="left:107.20px;top:8px;font-size:23.4px;color:#cccccc;transform:scaleX(0.9202);transform-origin:0 0;">main*</div>
<div class="t" style="left:258.84px;top:8px;font-size:23.4px;color:#cccccc;transform:scaleX(0.9252);transform-origin:0 0;">0</div>
<div class="t" style="left:307.14px;top:8px;font-size:23.4px;color:#cccccc;transform:scaleX(0.9252);transform-origin:0 0;">0</div>
<div class="t" style="left:1517.52px;top:8px;font-size:23.4px;color:#cccccc;transform:scaleX(0.9215);transform-origin:0 0;">CiobanuDanut01 (now)</div>
<div class="t" style="left:1827.92px;top:8px;font-size:23.4px;color:#cccccc;transform:scaleX(0.8962);transform-origin:0 0;">Ln 11, Col 14</div>
<div class="t" style="left:1979.10px;top:8px;font-size:23.4px;color:#cccccc;transform:scaleX(0.8518);transform-origin:0 0;">Spaces: 4</div>
<div class="t" style="left:2095.34px;top:8px;font-size:23.4px;color:#cccccc;transform:scaleX(0.8878);transform-origin:0 0;">UTF-8</div>
<div class="t" style="left:2181.27px;top:8px;font-size:23.4px;color:#cccccc;transform:scaleX(0.7955);transform-origin:0 0;">CRLF</div>
<div class="t" style="left:2293.36px;top:8px;font-size:23.4px;color:#cccccc;transform:scaleX(0.9717);transform-origin:0 0;">C++</div>
<div class="t" style="left:2420.20px;top:8px;font-size:23.4px;color:#cccccc;transform:scaleX(0.9129);transform-origin:0 0;">Win32</div>
</div>
</body>
</html>
